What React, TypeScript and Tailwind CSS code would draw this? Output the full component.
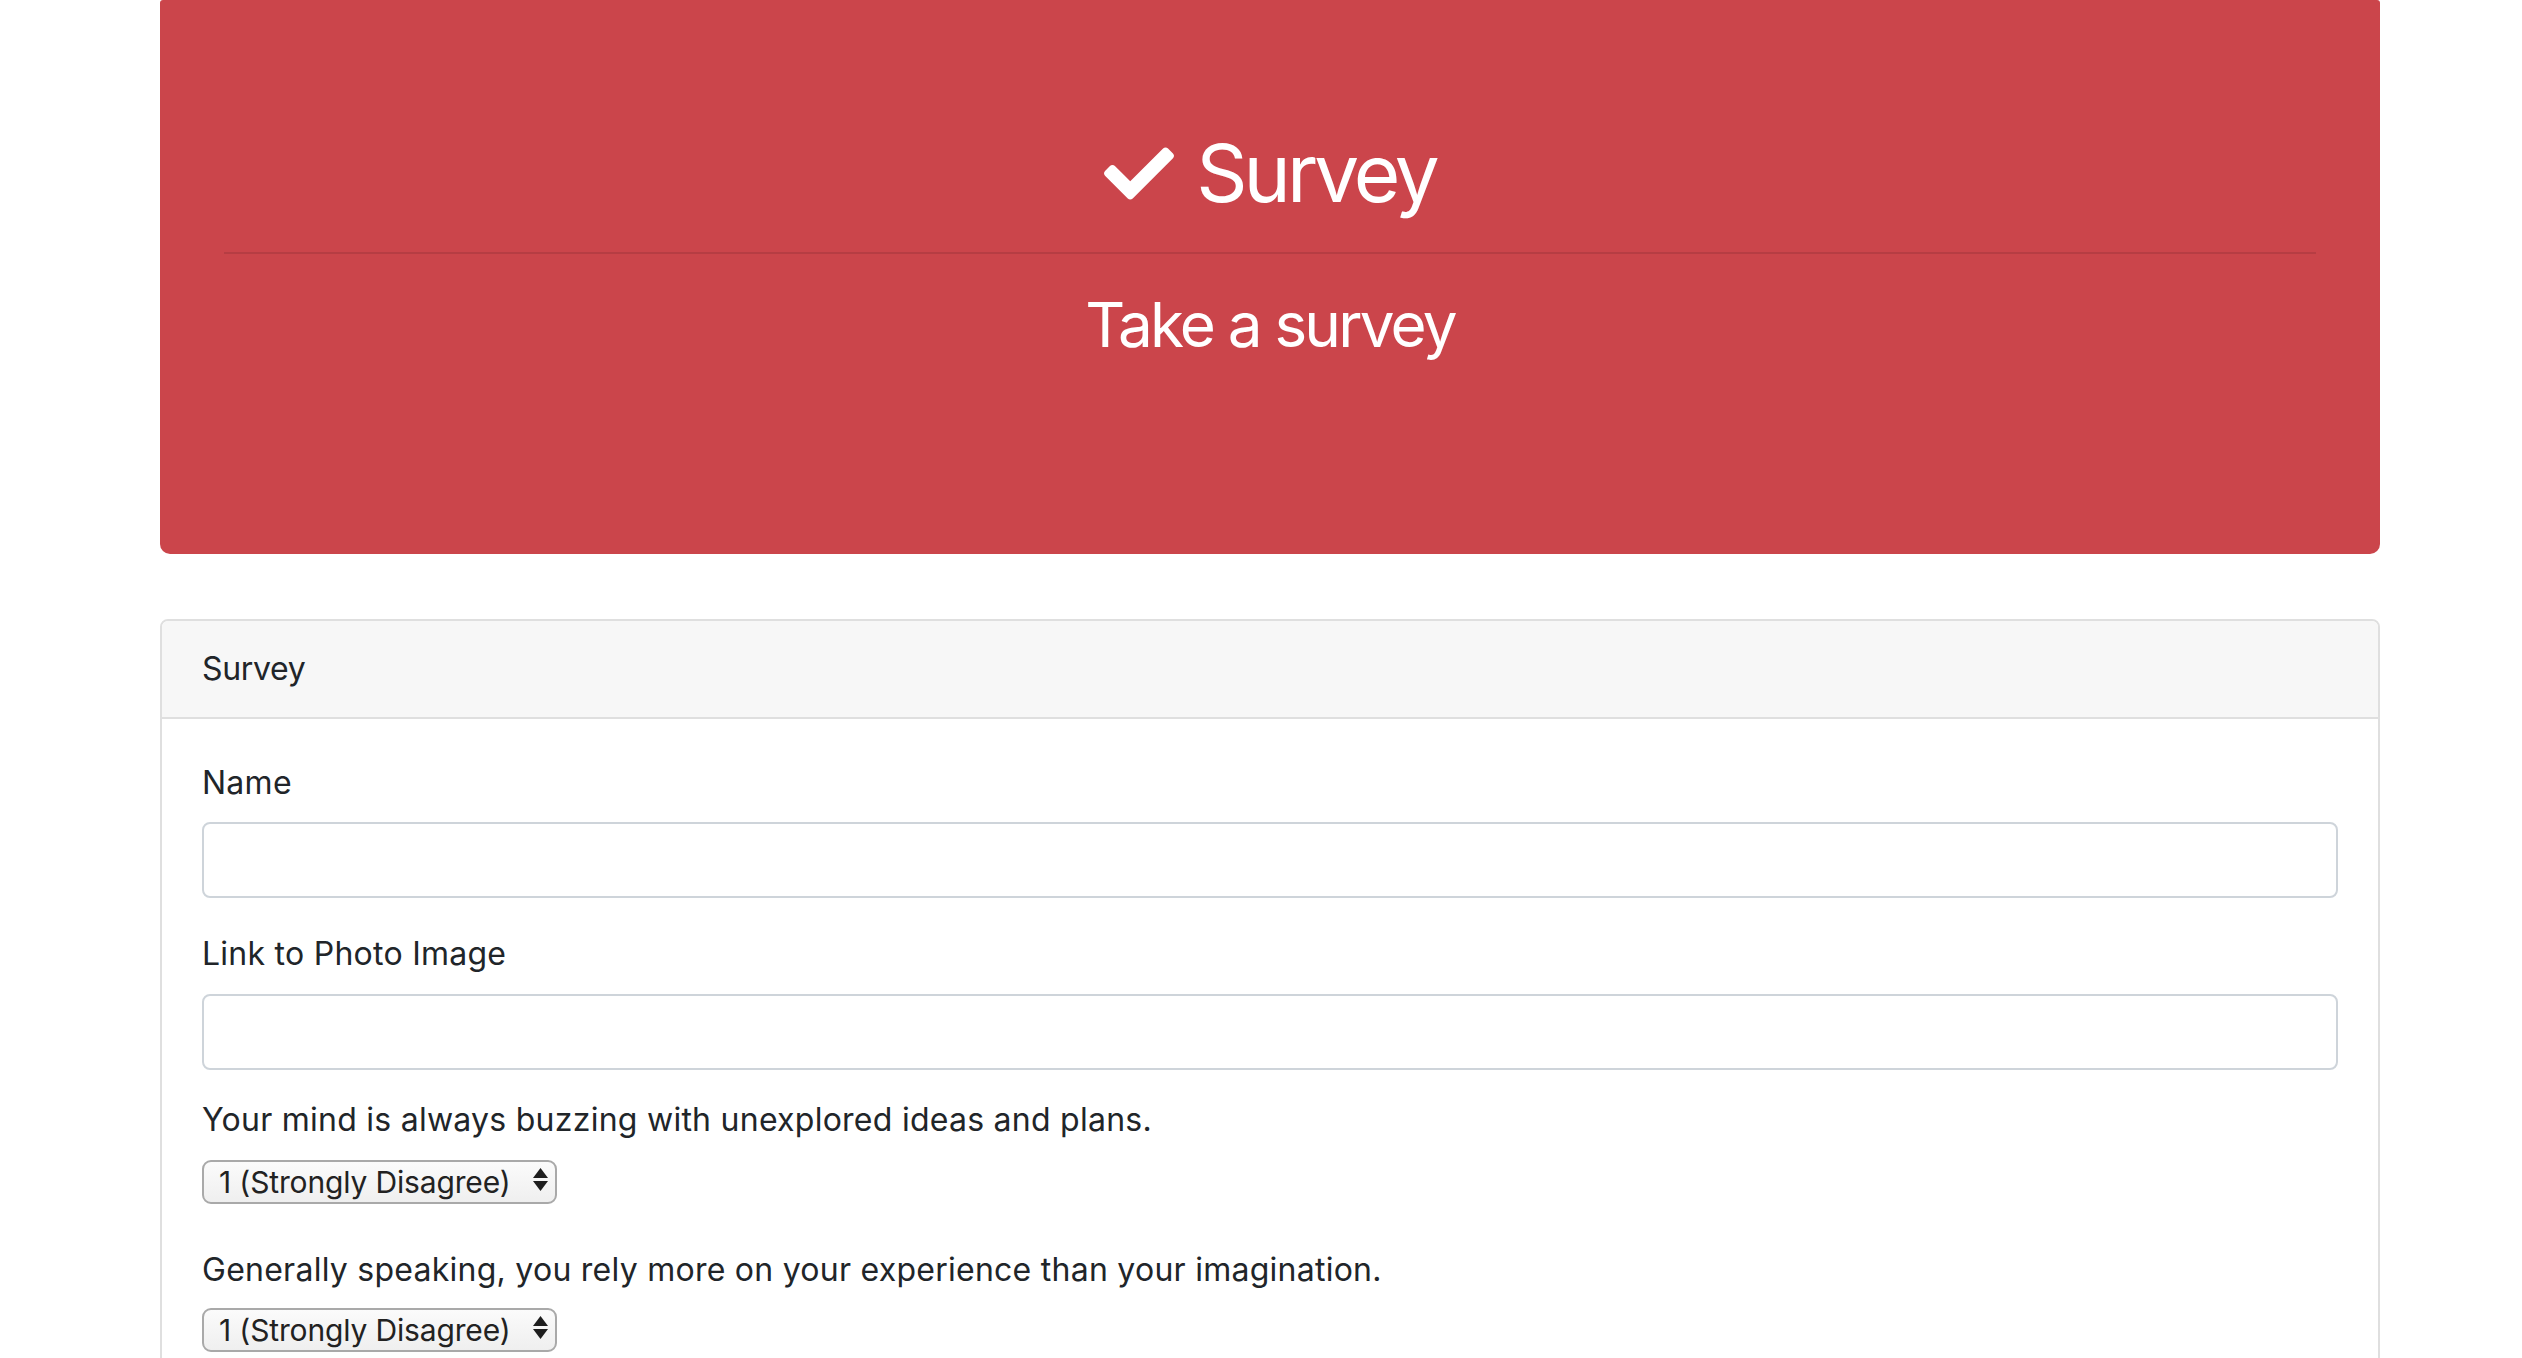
import React from "react";

const CheckIcon = () => (
  <svg viewBox="0 64 512 384" className="w-[70px] h-[53px] fill-white" aria-hidden="true">
    <path d="M173.898 439.404l-166.4-166.4c-9.997-9.997-9.997-26.206 0-36.204l36.203-36.204c9.997-9.998 26.207-9.998 36.204 0L192 312.69 432.095 72.596c9.997-9.997 26.207-9.997 36.204 0l36.203 36.204c9.997 9.997 9.997 26.206 0 36.204l-294.4 294.401c-9.998 9.997-26.207 9.997-36.204-.001z" />
  </svg>
);

const SelectArrows = () => (
  <svg viewBox="0 0 15 24" className="w-[15px] h-[24px] fill-[#1e1e1e]" aria-hidden="true">
    <path d="M7.5 0 L15 10 H0 Z" />
    <path d="M0 13 H15 L7.5 23 Z" />
  </svg>
);

const options = [
  "1 (Strongly Disagree)",
  "2 (Disagree)",
  "3 (Neutral)",
  "4 (Agree)",
  "5 (Strongly Agree)",
];

const RatingSelect = () => (
  <span className="relative inline-block">
    <select
      defaultValue={options[0]}
      className="appearance-none h-[44px] w-[355px] pl-[15px] pr-[28px] rounded-[9px] border-2 border-[#a9a9a9] bg-gradient-to-b from-[#fbfbfb] to-[#efefef] text-[30px] leading-[40px] tracking-[-0.005em] text-[#222] outline-none"
    >
      {options.map((o) => (
        <option key={o}>{o}</option>
      ))}
    </select>
    <span className="pointer-events-none absolute right-[9px] top-[10px]">
      <SelectArrows />
    </span>
  </span>
);

export default function App() {
  return (
    <div className="h-[1358px] overflow-hidden bg-white font-['Inter','Liberation_Sans',sans-serif] text-[#212529]">
      <div className="ml-[160px] w-[2220px]">
        {/* Jumbotron */}
        <div className="h-[554px] rounded-b-[10px] rounded-t-[3px] bg-[#cb454b] px-[64px] pt-[125px] text-center text-white">
          <h1 className="flex items-center justify-center gap-[22px] text-[80px] leading-[96px] tracking-[-0.05em]">
            <CheckIcon />
            <span>Survey</span>
          </h1>
          <hr className="mt-[31px] border-0 border-t-2 border-black/10" />
          <h2 className="mt-[33px] text-[62px] leading-[76px] tracking-[-0.045em]">Take a survey</h2>
        </div>

        {/* Card */}
        <div className="mt-[65px] rounded-[8px] border-2 border-[#dfdfdf]">
          <div className="rounded-t-[6px] border-b-2 border-[#dfdfdf] bg-[#f7f7f7] px-[40px] py-[24px] text-[32px] leading-[48px] tracking-[-0.01em]">
            Survey
          </div>
          <div className="px-[40px] pt-[40px] pb-[40px] text-[32px] leading-[48px] tracking-[0.008em]">
            <label className="block">Name</label>
            <input
              type="text"
              className="mt-[15px] block h-[76px] w-full rounded-[8px] border-2 border-[#ced4da] bg-white px-[24px] outline-none"
            />
            <label className="mt-[32px] block">Link to Photo Image</label>
            <input
              type="text"
              className="mt-[16px] block h-[76px] w-full rounded-[8px] border-2 border-[#ced4da] bg-white px-[24px] outline-none"
            />
            <label className="mt-[26px] block">Your mind is always buzzing with unexplored ideas and plans.</label>
            <div className="mt-[14px] flex">
              <RatingSelect />
            </div>
            <label className="mt-[40px] block">
              Generally speaking, you rely more on your experience than your imagination.
            </label>
            <div className="mt-[12px] flex">
              <RatingSelect />
            </div>
          </div>
        </div>
      </div>
    </div>
  );
}
